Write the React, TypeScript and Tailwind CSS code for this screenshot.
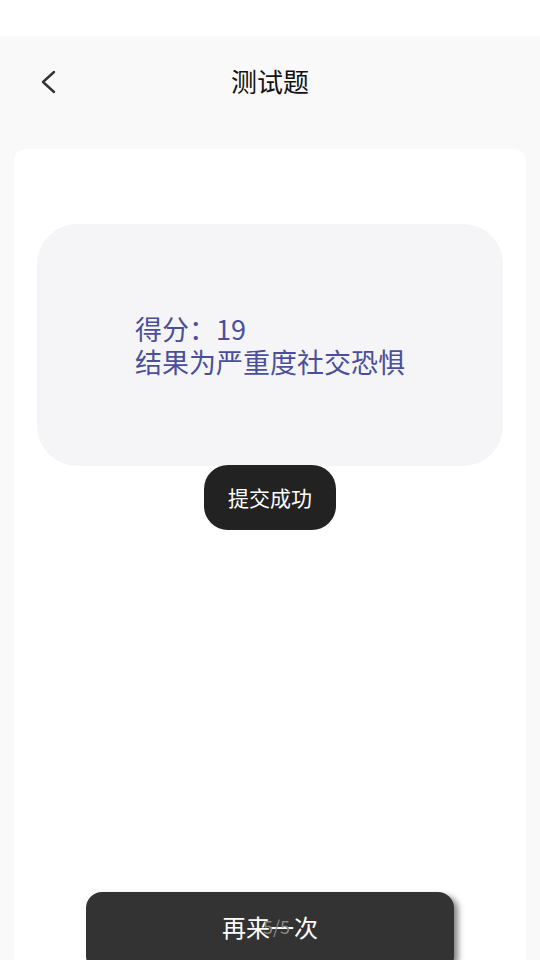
const App = () => {
  return (
    <div
      className="relative flex h-[960px] w-[540px] flex-col overflow-hidden bg-[#f9f9f9]"
      style={{ fontFamily: '"Noto Sans CJK SC", "Noto Sans", sans-serif' }}
    >
      {/* Status bar */}
      <div className="h-9 shrink-0 bg-white"></div>

      {/* Header */}
      <div className="relative flex h-[92px] shrink-0 items-center justify-center">
        <button className="absolute left-[38px] top-[33px]">
          <svg width="20" height="26" viewBox="0 0 20 26" fill="none">
            <polyline
              points="16,3 5,13 16,23"
              stroke="#333"
              strokeWidth="2.4"
              strokeLinecap="round"
              strokeLinejoin="round"
            />
          </svg>
        </button>
        <span className="-mt-[2px] text-[26px] leading-none text-[#111]">测试题</span>
      </div>

      <div className="h-[21px] shrink-0"></div>

      {/* Card */}
      <div className="mx-[14px] flex flex-1 flex-col items-center rounded-t-[12px] bg-white pt-[75px]">
        {/* Result box */}
        <div className="flex h-[242px] w-[466px] flex-col justify-center gap-[1px] rounded-[40px] bg-[#f5f5f7] pl-[98px]">
          <p className="text-[27px] leading-[32px] text-[#4a4f9b]">得分：19</p>
          <p className="text-[27px] leading-[32px] text-[#4a4f9b]">结果为严重度社交恐惧</p>
        </div>
      </div>

      {/* Toast */}
      <div className="absolute left-[204px] top-[465px] flex h-[65px] w-[132px] items-center justify-center rounded-[24px] bg-[#222]">
        <span className="text-[21px] text-white">提交成功</span>
      </div>

      {/* Bottom button */}
      <button className="absolute left-[86px] top-[892px] flex h-[80px] w-[368px] items-start justify-center rounded-[16px] bg-[#333] pt-[19px] shadow-[6px_2px_6px_-2px_rgba(0,0,0,0.5)]">
        <span className="text-[24px] leading-[32px] text-white">再来一次</span>
        <span className="absolute left-[177px] top-[20px] text-[18px] leading-[28px] text-[#888]">
          5/5
        </span>
      </button>
    </div>
  );
};

export default App;
